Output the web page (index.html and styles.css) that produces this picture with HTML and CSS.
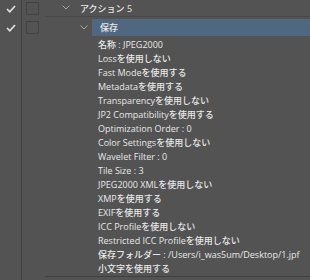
FILE: index.html
```html
<!DOCTYPE html>
<html lang="ja">
<head>
    <meta charset="UTF-8">
    <title>アクション</title>
    <link rel="stylesheet" href="styles.css">
</head>
<body>
    <div class="panel">
        <div class="gutter">
            <div class="check-cell row-action">
                <svg width="10" height="8" viewBox="0 0 10 8"><polyline points="1,4 3.8,6.8 9,1" /></svg>
            </div>
            <div class="check-cell row-step">
                <svg width="10" height="8" viewBox="0 0 10 8"><polyline points="1,4 3.8,6.8 9,1" /></svg>
            </div>
        </div>
        <div class="main">
            <div class="row row-action">
                <div class="box-col"><span class="box"></span></div>
                <div class="tree action">
                    <svg class="chevron" width="8" height="5" viewBox="0 0 8 5"><polyline points="0.5,0.5 4,4 7.5,0.5" /></svg>
                    <span class="label">アクション 5</span>
                </div>
            </div>
            <div class="row row-step">
                <div class="box-col"><span class="box"></span></div>
                <div class="tree step">
                    <svg class="chevron" width="8" height="5" viewBox="0 0 8 5"><polyline points="0.5,0.5 4,4 7.5,0.5" /></svg>
                    <span class="label selected">保存</span>
                </div>
            </div>
            <div class="details">
                <div class="box-col"></div>
                <ul class="params">
                    <li>名称 : JPEG2000</li>
                    <li>Lossを使用しない</li>
                    <li>Fast Modeを使用する</li>
                    <li>Metadataを使用する</li>
                    <li>Transparencyを使用しない</li>
                    <li>JP2 Compatibilityを使用する</li>
                    <li>Optimization Order : 0</li>
                    <li>Color Settingsを使用しない</li>
                    <li>Wavelet Filter : 0</li>
                    <li>Tile Size : 3</li>
                    <li>JPEG2000 XMLを使用しない</li>
                    <li>XMPを使用する</li>
                    <li>EXIFを使用する</li>
                    <li>ICC Profileを使用しない</li>
                    <li>Restricted ICC Profileを使用しない</li>
                    <li>保存フォルダー : /Users/i_was5um/Desktop/1.jpf</li>
                    <li>小文字を使用する</li>
                </ul>
            </div>
        </div>
    </div>
</body>
</html>
```

FILE: styles.css
```css
body {
    margin: 0;
    padding: 0;
    background-color: #535353;
    font-family: "Open Sans", "Noto Sans CJK JP", sans-serif;
    font-size: 9px;
    font-weight: 500;
    color: #e8e8e8;
    overflow: hidden;
}
.panel {
    display: flex;
    height: 280px;
}
.gutter {
    width: 21px;
    flex-shrink: 0;
    border-right: 1px solid #404040;
}
.check-cell {
    display: flex;
    align-items: center;
    justify-content: center;
    padding-left: 1px;
}
.check-cell svg polyline {
    fill: none;
    stroke: #e0e0e0;
    stroke-width: 1.7;
}
.row-action {
    height: 17px;
}
.row-step {
    height: 20px;
    margin-top: 1px;
}
.main {
    flex: 1;
    display: flex;
    flex-direction: column;
}
.row {
    display: flex;
}
.box-col {
    width: 23px;
    flex-shrink: 0;
    display: flex;
    align-items: center;
    padding-left: 4px;
    box-sizing: border-box;
}
.box {
    width: 11px;
    height: 11px;
    border: 1px solid #424242;
}
.tree {
    flex: 1;
    display: flex;
    align-items: center;
}
.action {
    padding-left: 17px;
    border-bottom: 1px solid #4a4a4a;
}
.step {
    padding-left: 35px;
}
.chevron polyline {
    fill: none;
    stroke: #a5a5a5;
    stroke-width: 1;
}
.action .label {
    margin-left: 10px;
    padding-top: 1px;
}
.step .chevron {
    margin-right: 4px;
}
.selected {
    flex: 1;
    align-self: stretch;
    display: flex;
    align-items: center;
    margin: 1px 0;
    padding-left: 8px;
    background-color: #4f6781;
}
.details {
    display: flex;
    flex: 1;
}
.params {
    list-style: none;
    margin: 0 0 3px 0;
    padding: 1px 0 0 53px;
    flex: 1;
    line-height: 14px;
    white-space: nowrap;
    border-bottom: 1px solid #404040;
}
```
